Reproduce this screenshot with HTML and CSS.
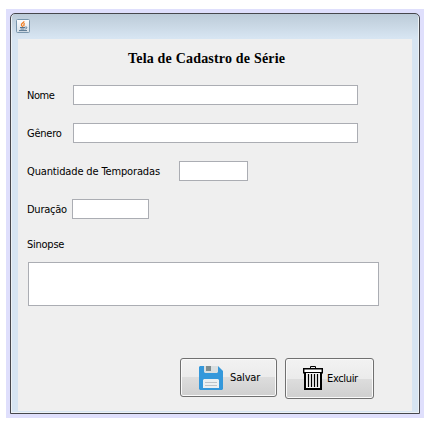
FILE: index.html
```html
<!DOCTYPE html>
<html lang="pt-BR">
<head>
<meta charset="utf-8">
<title>Tela de Cadastro de Série</title>
<link rel="stylesheet" href="styles.css">
</head>
<body>
<div class="backdrop">
  <div class="window">
    <header class="titlebar">
      <svg class="java" width="14" height="14" viewBox="0 0 14 14">
        <defs><linearGradient id="tile" x2="0" y2="1"><stop stop-color="#fff"/><stop offset="1" stop-color="#d5dfe8"/></linearGradient></defs>
        <rect x=".5" y=".5" width="13" height="13" rx="1" fill="url(#tile)" stroke="#7996ad"/>
        <path d="M8 2.2C8 4 5 4.2 5.4 6c.2.9 1.2 1 1.1 2M8.7 4.3C7.2 5 8.5 6 7.6 7.3" fill="none" stroke="#ef7d24" stroke-width="1.3"/>
        <path d="M4 8.5h5M4.5 10h4M3 11.6h8M9.3 8c2.4-.3 1.8 1.6 0 2" fill="none" stroke="#54738e"/>
      </svg>
    </header>
    <form class="content">
      <h1>Tela de Cadastro de Série</h1>
      <div class="row"><label class="nome" for="nome">Nome</label><input id="nome" class="wide"></div>
      <div class="row"><label class="genero" for="genero">Gênero</label><input id="genero" class="wide"></div>
      <div class="row"><label class="temporadas" for="temporadas">Quantidade de Temporadas</label><input id="temporadas" class="seasons"></div>
      <div class="row"><label class="duracao" for="duracao">Duração</label><input id="duracao" class="duration"></div>
      <label class="sinopse" for="sinopse">Sinopse</label>
      <textarea id="sinopse"></textarea>
      <div class="actions">
        <button type="button" class="save">
          <svg width="24" height="24" viewBox="0 0 24 24">
            <path d="M1 0h18l5 5v18l-1 1H1l-1-1V1z" fill="#3498db"/>
            <path d="M5 0h14v6l-1 1H6L5 6z" fill="#d9dfe1"/>
            <path d="M7 0h5v5H7z" fill="#7f8c8d"/>
            <path d="M5 13h14l1 1v8H4v-8z" fill="#ecf0f1"/>
            <path d="M6 16.5h12M6 19.5h12" stroke="#bdc3c7"/>
          </svg>
          <span>Salvar</span>
        </button>
        <button type="button" class="delete">
          <svg width="20" height="24" viewBox="0 0 20 24" fill="none" stroke="#000">
            <path d="M7.5 2V.5h5V2" />
            <path d="M.7 2.7h18.6v4H.7z" fill="#fff" stroke-width="1.4"/>
            <path d="M2 7v16h16V7" fill="#f4f4f4" stroke-width="2"/>
            <path d="M5.5 8v13M8.5 8v13M11.5 8v13M14.5 8v13" stroke-width="1.2"/>
          </svg>
          <span>Excluir</span>
        </button>
      </div>
    </form>
  </div>
</div>
</body>
</html>
```
FILE: styles.css
```css
* { box-sizing: border-box; }
body {
  margin: 0;
  padding: 9px 7px 4px 6px;
  background: #fff;
  font: 11px/14px "DejaVu Sans Condensed", "DejaVu Sans", sans-serif;
  color: #000;
}
.backdrop { width: 418px; height: 409px; padding: 4px; background: #dfdffc; }
.window {
  width: 410px;
  height: 401px;
  border: 1px solid #46474c;
  border-radius: 5px 5px 0 0;
  padding: 0 6px 2px 7px;
  background: linear-gradient(#bccbd8, #d7e5f2 24px);
  box-shadow: inset 1px 0 #edf2f6, inset -1px -1px #edf2f6;
  display: flex;
  flex-direction: column;
}
.titlebar { height: 25px; padding: 5px 0 0; margin-left: -2px; }
.java { display: block; }
.content { width: 394px; height: 372px; background: #efefef; display: flex; flex-direction: column; }
h1 {
  margin: 11px 0 20px 110px;
  height: 15px;
  font: bold 14px/17px "Liberation Serif", serif;
  letter-spacing: 0.19px;
}
.row { height: 20px; margin-bottom: 18px; padding-left: 9px; display: flex; align-items: center; }
label { white-space: nowrap; letter-spacing: -0.25px; }
.row label { padding-top: 2px; }
input, textarea {
  margin: 0;
  padding: 1px 3px;
  border: 1px solid #abadb3;
  border-radius: 0;
  background: #fff;
  outline: none;
  font: inherit;
}
input { height: 20px; }
.nome, .genero { width: 46px; }
.nome { letter-spacing: -0.45px; }
.temporadas { width: 152px; letter-spacing: -0.14px; }
.duracao { width: 45px; }
.wide { width: 285px; }
.seasons { width: 69px; }
.duration { width: 77px; }
.sinopse { margin: 1px 0 10px 9px; height: 14px; }
textarea { width: 351px; height: 44px; margin-left: 10px; resize: none; }
.actions { display: flex; align-items: flex-start; gap: 8px; margin: 52px 0 0 162px; }
button {
  display: flex;
  align-items: center;
  margin: 0;
  padding: 0;
  border: 1px solid #707070;
  border-radius: 3px;
  box-shadow: inset 0 0 0 1px #fafafa;
  background: linear-gradient(#f2f2f2 0%, #ebebeb 50%, #dddddd 50%, #cfcfcf 100%);
  color: #000;
  font: inherit;
}
.save { width: 97px; height: 39px; padding-left: 18px; gap: 7px; letter-spacing: -0.15px; }
.delete { width: 89px; height: 41px; padding-left: 17px; gap: 4px; letter-spacing: -0.35px; }
.delete svg { margin-top: -1px; }
```
